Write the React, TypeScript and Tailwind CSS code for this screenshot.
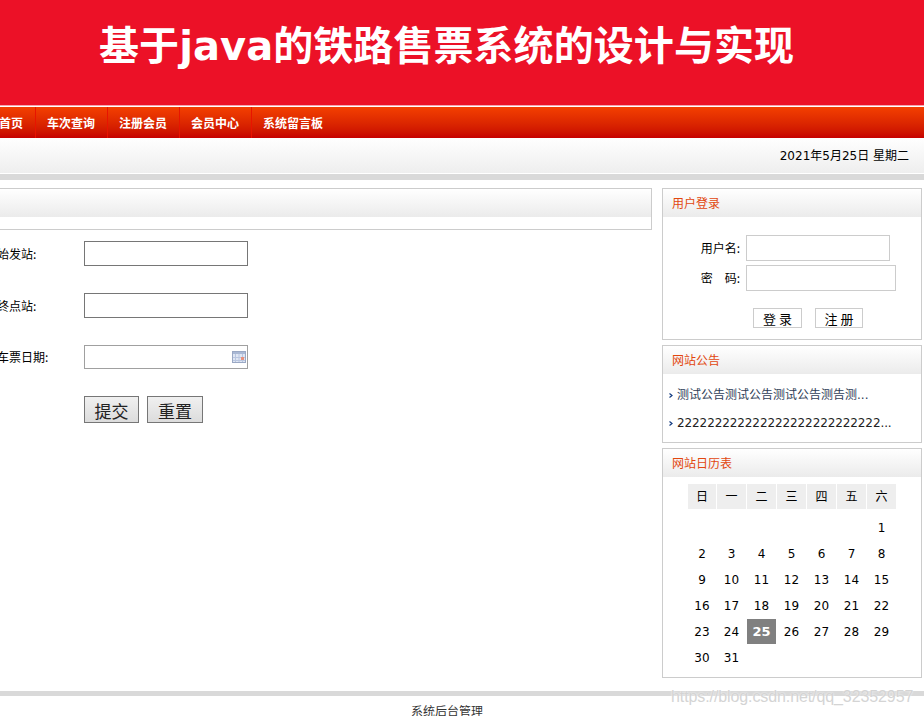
import React from "react";

const navItems = ["首页", "车次查询", "注册会员", "会员中心", "系统留言板"];
const weekDays = ["日", "一", "二", "三", "四", "五", "六"];
const days: (number | null)[] = [
    null, null, null, null, null, null, 1,
    2, 3, 4, 5, 6, 7, 8,
    9, 10, 11, 12, 13, 14, 15,
    16, 17, 18, 19, 20, 21, 22,
    23, 24, 25, 26, 27, 28, 29,
    30, 31, null, null, null, null, null,
];

const PanelHead = ({ title }: { title: string }): JSX.Element => (
    <div className="h-7 pl-[9px] pt-[1px] leading-[29px] text-[12px] text-[#e2470f] bg-gradient-to-b from-white to-[#ebebeb]">
        {title}
    </div>
);

const Bullet = (): JSX.Element => (
    <svg className="shrink-0 mr-[4px] ml-[6px]" width="4" height="5" viewBox="0 0 4 5">
        <path d="M0.5 0.5 L3 2.5 L0.5 4.5" fill="none" stroke="#123a80" strokeWidth="1.2" />
    </svg>
);

const CalendarIcon = (): JSX.Element => (
    <svg className="absolute right-[2px] top-[6px]" width="14" height="12" viewBox="0 0 14 12">
        <rect x="0" y="0" width="14" height="12" fill="#dfe6f3" />
        <rect x="0" y="0" width="14" height="3" fill="#a9b8d4" />
        <path d="M0 6.5H14M0 9.5H14M3.5 3V12M7 3V12M10.5 3V12" stroke="#b9c6e0" strokeWidth="1" />
        <rect x="9" y="6" width="3" height="3" fill="#e8907c" />
        <rect x="0.5" y="0.5" width="13" height="11" fill="none" stroke="#9aa8c4" />
    </svg>
);

const App = (): JSX.Element => {
    return (
        <div className="relative w-[924px] h-[716px] overflow-hidden bg-white text-[12px] text-black font-['DejaVu_Sans','Noto_Sans_CJK_SC',sans-serif]">
            {/* banner */}
            <div className="h-[105px] bg-[#ec1127] pl-[99px] pt-[17px]">
                <h1 className="text-[40px] leading-[58px] font-bold tracking-[0.07px] text-white whitespace-nowrap">
                    基于java的铁路售票系统的设计与实现
                </h1>
            </div>
            <div className="h-px bg-[#f7a5ad]" />
            <div className="h-px bg-white" />

            {/* nav */}
            <div className="h-[31px] flex items-stretch -ml-[13px] bg-gradient-to-b from-[#f43f00] to-[#c60000]">
                {navItems.map((item, i) => (
                    <div
                        key={item}
                        className={
                            i === 0
                                ? "w-[48px] pl-3 leading-[35px] font-bold text-white whitespace-nowrap"
                                : "w-[72px] pl-[11px] leading-[35px] font-bold text-white whitespace-nowrap border-l border-[#e81400]"
                        }
                    >
                        {item}
                    </div>
                ))}
            </div>

            {/* date bar */}
            <div className="h-[35px] flex items-center justify-end pr-[15px] bg-gradient-to-b from-white to-[#eeeeee]">
                2021年5月25日 星期二
            </div>
            <div className="h-px bg-white" />
            <div className="h-[6px] bg-[#d9d9d9]" />

            {/* main */}
            <div className="flex pt-2 pr-[2px] gap-[10px]">
                <div className="w-[652px] shrink-0">
                    <div className="h-[42px] border border-l-0 border-[#cccccc]">
                        <div className="h-7 bg-gradient-to-b from-white to-[#ebebeb]" />
                    </div>
                    <form className="pt-[11px] flex flex-col -ml-[3px] font-['Noto_Sans_CJK_SC',sans-serif]">
                        <div className="flex items-center h-[25px]">
                            <label className="w-[87px]">始发站:</label>
                            <input className="w-[164px] h-[25px] border border-[#767676] bg-white" />
                        </div>
                        <div className="flex items-center h-[25px] mt-[27px]">
                            <label className="w-[87px]">终点站:</label>
                            <input className="w-[164px] h-[25px] border border-[#767676] bg-white" />
                        </div>
                        <div className="flex items-center h-6 mt-[27px]">
                            <label className="w-[87px]">车票日期:</label>
                            <div className="relative w-[164px] h-6">
                                <input className="w-full h-full border border-[#a0a0a0] bg-white" />
                                <CalendarIcon />
                            </div>
                        </div>
                        <div className="flex gap-2 ml-[87px] mt-[27px]">
                            <button type="button" className="w-[55px] h-[27px] pt-[2px] text-[17px] leading-none border border-[#767676] bg-gradient-to-b from-[#f0f0f0] to-[#dcdcdc] text-[#222222]">
                                提交
                            </button>
                            <button type="button" className="w-[56px] h-[27px] pt-[2px] text-[17px] leading-none border border-[#767676] bg-gradient-to-b from-[#f0f0f0] to-[#dcdcdc] text-[#222222]">
                                重置
                            </button>
                        </div>
                    </form>
                </div>

                {/* sidebar */}
                <div className="w-[260px] shrink-0 flex flex-col gap-[5px]">
                    <div className="h-[152px] border border-[#cccccc]">
                        <PanelHead title="用户登录" />
                        <div className="pt-[18px] font-['Noto_Sans_CJK_SC',sans-serif]">
                            <div className="flex items-center h-[26px]">
                                <span className="w-[77px] text-right">用户名:</span>
                                <input className="ml-[6px] w-[144px] h-[26px] border border-[#cccccc]" />
                            </div>
                            <div className="flex items-center h-[26px] mt-1">
                                <span className="w-[77px] text-right whitespace-pre">密　码:</span>
                                <input className="ml-[6px] w-[150px] h-[26px] border border-[#cccccc]" />
                            </div>
                            <div className="flex ml-[90px] gap-[13px] mt-[17px]">
                                <button type="button" className="w-[49px] h-5 border border-[#cccccc] text-[13px] leading-none whitespace-pre">
                                    登 录
                                </button>
                                <button type="button" className="w-[48px] h-5 border border-[#cccccc] text-[13px] leading-none whitespace-pre">
                                    注 册
                                </button>
                            </div>
                        </div>
                    </div>

                    <div className="h-[98px] border border-[#cccccc]">
                        <PanelHead title="网站公告" />
                        <div className="pt-[7px] text-[#2f3e57]">
                            <div className="flex items-center h-[28px] whitespace-nowrap">
                                <Bullet />
                                测试公告测试公告测试公告测告测...
                            </div>
                            <div className="flex items-center h-[28px] text-[#222222] tracking-[-0.1px] whitespace-nowrap">
                                <Bullet />
                                222222222222222222222222222...
                            </div>
                        </div>
                    </div>

                    <div className="h-[230px] border border-[#cccccc]">
                        <PanelHead title="网站日历表" />
                        <div className="pl-[25px] pt-[7px]">
                            <div className="grid grid-cols-[28px_repeat(6,29px)] gap-x-px mb-[6px]">
                                {weekDays.map((d) => (
                                    <div key={d} className="h-[25px] flex items-center justify-center bg-[#eeeeee]">
                                        {d}
                                    </div>
                                ))}
                            </div>
                            <div className="grid grid-cols-[28px_repeat(6,29px)] gap-x-px gap-y-px">
                                {days.map((d, i) => (
                                    <div
                                        key={i}
                                        className={`h-[25px] flex items-center justify-center ${d === 25 ? "bg-[#808080] text-white font-bold text-[13px]" : ""}`}
                                    >
                                        {d}
                                    </div>
                                ))}
                            </div>
                        </div>
                    </div>
                </div>
            </div>

            {/* footer */}
            <div className="mt-[13px] h-[5px] bg-[#d9d9d9]" />
            <div className="pt-[7px] text-center pr-[30px] leading-[18px] text-[#333333]">系统后台管理</div>

            {/* watermark */}
            <div className="absolute left-[671px] top-[687px] text-[16px] leading-5 tracking-[-0.1px] text-[#d4d4d4] font-['Liberation_Sans',sans-serif] [text-shadow:0_0_2px_#ffffff] whitespace-nowrap">
                https://blog.csdn.net/qq_32352957
            </div>
        </div>
    );
};

export default App;
